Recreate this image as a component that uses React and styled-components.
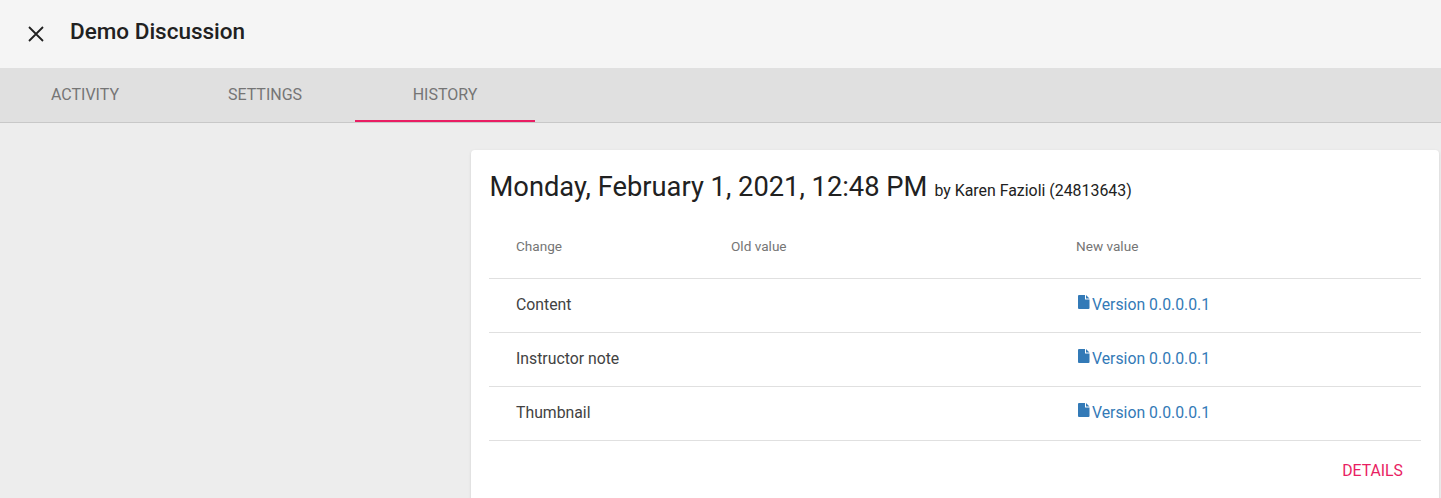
import styled, { createGlobalStyle } from "styled-components";

const GlobalStyle = createGlobalStyle`
  html, body {
    margin: 0;
    padding: 0;
    height: 100%;
    overflow: hidden;
    background: #ededed;
    font-family: Roboto, "Liberation Sans", sans-serif;
  }
`;

const Page = styled.div`
  width: 1441px;
  height: 498px;
  overflow: hidden;
  background: #ededed;
`;

const Header = styled.header`
  height: 68px;
  display: flex;
  align-items: center;
  gap: 23px;
  padding-left: 25px;
  background: #f5f5f5;
`;

const CloseButton = styled.button`
  width: 22px;
  height: 22px;
  margin-top: -1px;
  padding: 0;
  display: flex;
  align-items: center;
  justify-content: center;
  border: 0;
  background: none;
  color: #212121;
`;

const Title = styled.h1`
  margin: 0 0 7px;
  font-size: 22.5px;
  font-weight: 500;
  line-height: 30px;
  color: #212121;
`;

const Tabs = styled.nav`
  height: 54px;
  display: flex;
  background: #e0e0e0;
  border-bottom: 1px solid #c8c8c8;
`;

const Tab = styled.div`
  width: 180px;
  height: 54px;
  box-sizing: border-box;
  display: flex;
  align-items: center;
  justify-content: center;
  font-size: 16px;
  font-weight: 400;
  color: #757575;
  border-bottom: 2px solid ${(p) => (p.$active ? "#e91e63" : "transparent")};

  &:first-child {
    width: 175px;
    padding-right: 5px;
  }
`;

const Content = styled.main`
  display: flex;
  justify-content: flex-end;
  padding: 27px 2px 0 0;
`;

const Card = styled.section`
  width: 968px;
  height: 360px;
  box-sizing: border-box;
  padding: 18px 18px 0;
  background: #fff;
  border-radius: 4px;
  box-shadow: 0 1px 3px rgba(0, 0, 0, 0.12);
`;

const Heading = styled.div`
  display: flex;
  align-items: baseline;
  gap: 7px;
  height: 38px;
  padding-left: 0.5px;
`;

const DateText = styled.h2`
  margin: 0;
  font-size: 27.3px;
  font-weight: 400;
  line-height: 38px;
  color: #212121;
`;

const Author = styled.span`
  font-size: 15.9px;
  color: #212121;
`;

const Row = styled.div`
  display: grid;
  grid-template-columns: 215px 345px 1fr;
  align-items: center;
  height: ${(p) => (p.$head ? "72px" : "53px")};
  padding-left: 27px;
  border-bottom: 1px solid #e0e0e0;
`;

const HeadCell = styled.div`
  padding-top: 8px;
  font-size: 13.6px;
  color: #757575;
`;

const Cell = styled.div`
  margin-top: -2px;
  font-size: 15.8px;
  color: #424242;
`;

const VersionLink = styled.a`
  display: inline-flex;
  align-items: center;
  gap: 1px;
  font-size: 15.8px;
  color: #337ab7;
  text-decoration: none;
`;

const FileIcon = styled.svg`
  width: 14px;
  height: 16px;
  margin: -4px 0 0 1px;
  fill: #337ab7;
`;

const Actions = styled.div`
  display: flex;
  justify-content: flex-end;
  padding: 20px 18px 0 0;
`;

const DetailsButton = styled.span`
  font-size: 15.8px;
  font-weight: 400;
  color: #e91e63;
`;

const changes = ["Content", "Instructor note", "Thumbnail"];

function Version() {
  return (
    <VersionLink href="#">
      <FileIcon viewBox="0 0 14 16">
        <path d="M2 1h6v4.5h4.5V14a1 1 0 0 1-1 1H2a1 1 0 0 1-1-1V2a1 1 0 0 1 1-1zM9 1l3.5 3.5H9z" />
      </FileIcon>
      Version 0.0.0.0.1
    </VersionLink>
  );
}

export default function App() {
  return (
    <Page>
      <GlobalStyle />
      <Header>
        <CloseButton aria-label="Close">
          <svg width="22" height="22" viewBox="0 0 22 22">
            <path d="M4 4l14 14M18 4L4 18" stroke="currentColor" strokeWidth="1.8" fill="none" />
          </svg>
        </CloseButton>
        <Title>Demo Discussion</Title>
      </Header>
      <Tabs>
        <Tab>ACTIVITY</Tab>
        <Tab>SETTINGS</Tab>
        <Tab $active>HISTORY</Tab>
      </Tabs>
      <Content>
        <Card>
          <Heading>
            <DateText>Monday, February 1, 2021, 12:48 PM</DateText>
            <Author>by Karen Fazioli (24813643)</Author>
          </Heading>
          <div>
            <Row $head>
              <HeadCell>Change</HeadCell>
              <HeadCell>Old value</HeadCell>
              <HeadCell>New value</HeadCell>
            </Row>
            {changes.map((change) => (
              <Row key={change}>
                <Cell>{change}</Cell>
                <Cell />
                <Cell>
                  <Version />
                </Cell>
              </Row>
            ))}
          </div>
          <Actions>
            <DetailsButton>DETAILS</DetailsButton>
          </Actions>
        </Card>
      </Content>
    </Page>
  );
}
